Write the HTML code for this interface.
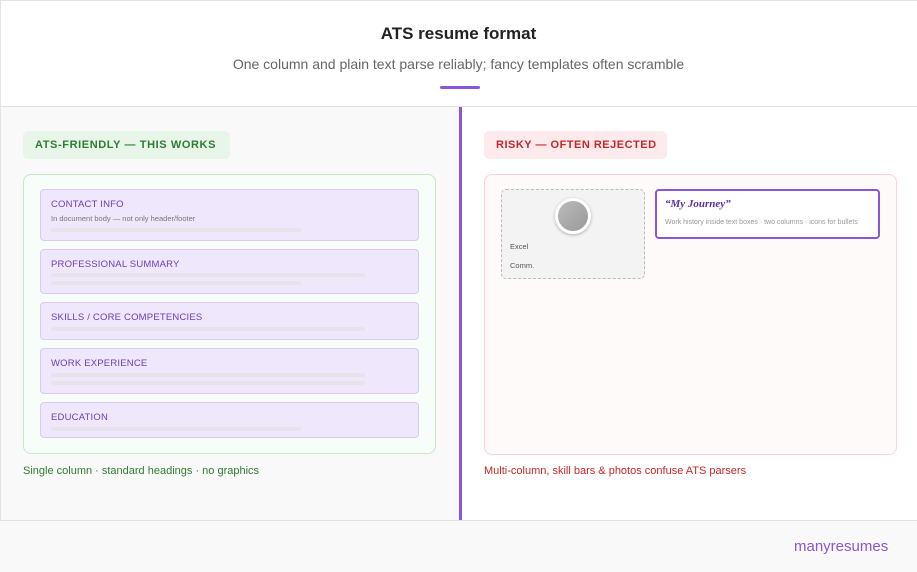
<!DOCTYPE html><html><head><meta charset="utf-8"><style>
*{margin:0;padding:0;box-sizing:border-box}
body{width:917px;height:572px;position:relative;font-family:"Liberation Sans",sans-serif;background:#fff;overflow:hidden}
.a{position:absolute}
.sec{position:absolute;left:40px;width:379px;background:#efe7fb;border:1px solid #d9c9f3;border-radius:4px}
.sec .h{position:absolute;left:10px;top:9px;font-size:9.5px;color:#6a3fb5;letter-spacing:.2px}
.bar{position:absolute;height:4px;background:#e6e4ea;border-radius:2px;left:10px}
</style></head><body>
<div class="a" style="left:0;top:0;width:917px;height:107px;background:#fff;border-left:1px solid #e4e4e4;border-top:1px solid #e4e4e4;border-bottom:1px solid #e0e0e0"></div>
<div class="a" style="left:0;top:24px;width:917px;text-align:center;font-size:17px;font-weight:bold;color:#222">ATS resume format</div>
<div class="a" style="left:0;top:56px;width:917px;text-align:center;font-size:14px;color:#666">One column and plain text parse reliably; fancy templates often scramble</div>
<div class="a" style="left:440px;top:86px;width:40px;height:3px;background:#8a56d8;border-radius:2px"></div>
<div class="a" style="left:0;top:107px;width:459px;height:413px;background:#f9f9f9;border-left:1px solid #e4e4e4"></div>
<div class="a" style="left:459px;top:107px;width:3px;height:413px;background:#8a56d8"></div>
<div class="a" style="left:0;top:520px;width:917px;height:52px;background:#f9f9f9;border-top:1px solid #e0e0e0"></div>
<div class="a" style="left:23px;top:131px;width:207px;height:28px;background:#e8f5e9;border-radius:5px;color:#2e7d32;font-size:11px;font-weight:bold;letter-spacing:.6px;line-height:28px;padding-left:12px">ATS-FRIENDLY — THIS WORKS</div>
<div class="a" style="left:23px;top:174px;width:413px;height:280px;background:#f7fdf8;border:1px solid #c8e6c9;border-radius:8px"></div>
<div class="sec" style="top:189px;height:52px"><div class="h">CONTACT INFO</div><div class="a" style="left:10px;top:24px;font-size:7.5px;color:#777">In document body — not only header/footer</div><div class="bar" style="top:38px;width:250px"></div></div>
<div class="sec" style="top:249px;height:45px"><div class="h">PROFESSIONAL SUMMARY</div><div class="bar" style="top:23px;width:314px"></div><div class="bar" style="top:31px;width:250px"></div></div>
<div class="sec" style="top:302px;height:38px"><div class="h">SKILLS / CORE COMPETENCIES</div><div class="bar" style="top:24px;width:314px"></div></div>
<div class="sec" style="top:348px;height:46px"><div class="h">WORK EXPERIENCE</div><div class="bar" style="top:24px;width:314px"></div><div class="bar" style="top:32px;width:314px"></div></div>
<div class="sec" style="top:402px;height:36px"><div class="h">EDUCATION</div><div class="bar" style="top:24px;width:250px"></div></div>
<div class="a" style="left:23px;top:465px;font-size:11px;color:#2e7d32">Single column · standard headings · no graphics</div>
<div class="a" style="left:484px;top:131px;width:183px;height:28px;background:#fdeaec;border-radius:5px;color:#c62828;font-size:11px;font-weight:bold;letter-spacing:.5px;line-height:28px;padding-left:12px">RISKY — OFTEN REJECTED</div>
<div class="a" style="left:484px;top:174px;width:413px;height:281px;background:#fffafa;border:1px solid #ffd0d5;border-radius:8px"></div>
<div class="a" style="left:501px;top:189px;width:144px;height:90px;background:#f3f3f3;border:1px dashed #bbb;border-radius:5px"></div>
<div class="a" style="left:555px;top:198px;width:36px;height:36px;border-radius:50%;background:linear-gradient(135deg,#bbb,#999);border:3px solid #fff;box-shadow:0 1px 3px rgba(0,0,0,.3)"></div>
<div class="a" style="left:510px;top:242px;font-size:7.5px;color:#555">Excel</div>
<div class="a" style="left:510px;top:261px;font-size:7.5px;color:#555">Comm.</div>
<div class="a" style="left:655px;top:189px;width:225px;height:50px;background:#fff;border:2px solid #8a56d8;border-radius:4px"></div>
<div class="a" style="left:665px;top:198px;font-family:'Liberation Serif',serif;font-style:italic;font-weight:bold;font-size:11px;color:#5a2fa0">“My Journey”</div>
<div class="a" style="left:665px;top:219px;font-size:7px;color:#999">Work history inside text boxes · two columns · icons for bullets</div>
<div class="a" style="left:484px;top:465px;font-size:11px;color:#c62828">Multi-column, skill bars &amp; photos confuse ATS parsers</div>
<div class="a" style="left:794px;top:538px;font-size:15px;color:#8a56d8">manyresumes</div>
</body></html>
